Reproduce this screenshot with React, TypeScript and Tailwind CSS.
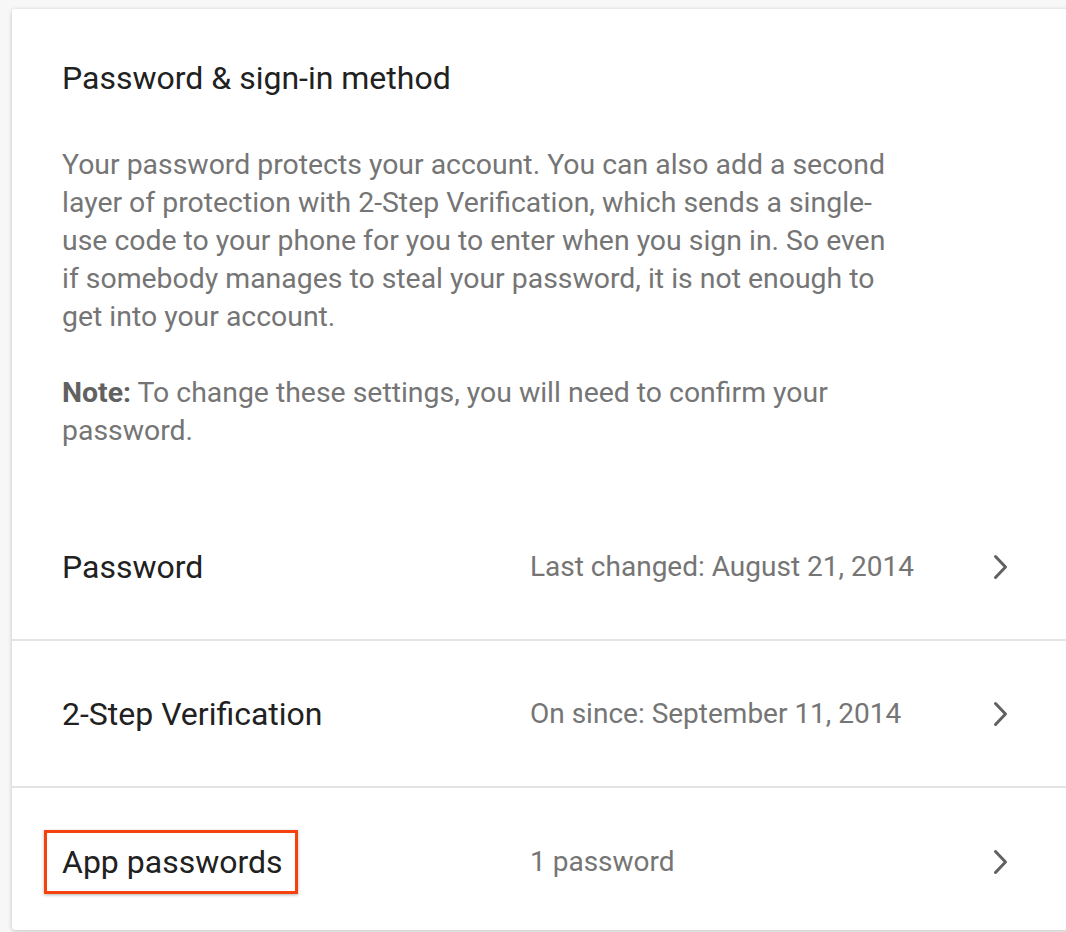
const ROWS = [
  { label: "Password", value: "Last changed: August 21, 2014" },
  { label: "2-Step Verification", value: "On since: September 11, 2014" },
  { label: "App passwords", value: "1 password", highlight: true },
];

function Chevron() {
  return (
    <svg width="16" height="26" viewBox="0 0 16 26" fill="none" className="shrink-0">
      <path d="M2.5 2.5 L12.5 13 L2.5 23.5" stroke="#616161" strokeWidth="3" strokeLinecap="round" strokeLinejoin="round" />
    </svg>
  );
}

export default function App() {
  return (
    <div className="h-[932px] overflow-hidden bg-[#f7f7f7] pl-[12px] pt-[9px] font-['Roboto',sans-serif]">
      <div className="h-[921px] w-[1080px] rounded-tl-[3px] rounded-bl-[3px] bg-white shadow-[0_1px_4px_rgba(0,0,0,0.22)]">
        <div className="pl-[50px] pt-[49px]">
          <h1 className="text-[32px] leading-[40px] text-[#212121]">Password &amp; sign-in method</h1>
          <div className="w-[840px] text-[28.4px] leading-[38px] text-[#757575]">
            <p className="mt-[48px]">
              Your password protects your account. You can also add a second layer of protection with 2-Step
              Verification, which sends a single-use code to your phone for you to enter when you sign in. So even
              if somebody manages to steal your password, it is not enough to get into your account.
            </p>
            <p className="mt-[38px]">
              <span className="font-bold text-[#616161]">Note:</span> To change these settings, you will need to
              confirm your password.
            </p>
          </div>
        </div>

        <div className="mt-[44px]">
          {ROWS.map((r, i) => (
            <div
              key={r.label}
              className={`flex h-[147px] items-center pl-[50px] pr-[83px] ${i < ROWS.length - 1 ? "border-b-2 border-[#e4e4e4]" : ""}`}
            >
              <div className="w-[468px]">
                <span
                  className={
                    r.highlight
                      ? "-ml-[18px] inline-block border-[3px] border-[#f4410d] pl-[15px] pr-[12px] py-[9px] text-[32px] leading-[40px] text-[#212121] shadow-[0_1px_3px_rgba(0,0,0,0.3)]"
                      : "text-[32px] leading-[40px] text-[#212121]"
                  }
                >
                  {r.label}
                </span>
              </div>
              <div className="flex-1 text-[28px] text-[#757575]">{r.value}</div>
              <Chevron />
            </div>
          ))}
        </div>
      </div>
    </div>
  );
}
